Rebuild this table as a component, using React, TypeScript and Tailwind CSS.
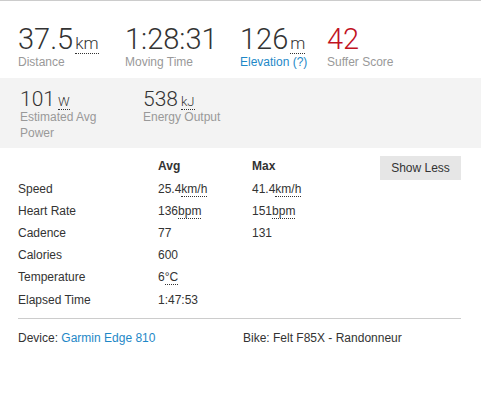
import React from "react";

const font = { fontFamily: '"Liberation Sans", Arial, sans-serif' };
const light = { fontFamily: 'Roboto, "Liberation Sans", Arial, sans-serif' };

function Unit({ children, className = "" }: { children: React.ReactNode; className?: string }) {
  return (
    <abbr className={`border-b border-dotted border-[#333] ${className}`} style={{ textDecoration: "none" }}>
      {children}
    </abbr>
  );
}

function BigStat({ value, unit, label, w, red, link }: { value: string; unit?: string; label: string; w: string; red?: boolean; link?: boolean }) {
  return (
    <li className={`${w} shrink-0`}>
      <div className={`text-[29px] leading-[32px] font-light ${red ? "text-[#c1121f]" : "text-[#333]"}`} style={light}>
        {value}
        {unit && <Unit className="text-[17px] leading-[16px] ml-[2px]">{unit}</Unit>}
      </div>
      <div className={`text-[12px] leading-[14px] ${link ? "text-[#1e88c7]" : "text-[#999]"}`}>{label}</div>
    </li>
  );
}

function MidStat({ value, unit, label, w }: { value: string; unit: string; label: string; w: string }) {
  return (
    <li className={`${w} shrink-0`}>
      <div className="text-[21px] leading-[20px] font-light text-[#333]" style={light}>
        {value}
        <Unit className="text-[13px] leading-[12px] ml-[3px]">{unit}</Unit>
      </div>
      <div className="text-[12px] leading-[16px] text-[#999] w-[90px]">{label}</div>
    </li>
  );
}

const rows: { label: string; avg: string; avgUnit?: string; max?: string; maxUnit?: string }[] = [
  { label: "Speed", avg: "25.4", avgUnit: "km/h", max: "41.4", maxUnit: "km/h" },
  { label: "Heart Rate", avg: "136", avgUnit: "bpm", max: "151", maxUnit: "bpm" },
  { label: "Cadence", avg: "77", max: "131" },
  { label: "Calories", avg: "600" },
  { label: "Temperature", avg: "6", avgUnit: "°C" },
  { label: "Elapsed Time", avg: "1:47:53" },
];

export default function App() {
  return (
    <div className="w-[481px] h-[400px] bg-white border-t border-[#ccc] text-[#333]" style={font}>
      <ul className="flex pl-[18px] pt-[22px] h-[77px]">
        <BigStat value="37.5" unit="km" label="Distance" w="w-[107px]" />
        <BigStat value="1:28:31" label="Moving Time" w="w-[115px]" />
        <BigStat value="126" unit="m" label="Elevation (?)" w="w-[87px]" link />
        <BigStat value="42" label="Suffer Score" w="w-[100px]" red />
      </ul>
      <ul className="flex bg-[#f3f3f3] pl-[20px] pt-[11px] h-[70px]">
        <MidStat value="101" unit="W" label="Estimated Avg Power" w="w-[123px]" />
        <MidStat value="538" unit="kJ" label="Energy Output" w="w-[120px]" />
      </ul>
      <div className="pl-[18px] pr-[20px] pt-[7px] text-[12px]">
        <div className="relative">
          <table className="border-collapse">
            <thead>
              <tr className="h-[22px]">
                <th className="w-[140px]"></th>
                <th className="w-[94px] text-left font-bold">Avg</th>
                <th className="w-[100px] text-left font-bold">Max</th>
              </tr>
            </thead>
            <tbody>
              {rows.map((r) => (
                <tr key={r.label} className="h-[22.2px]">
                  <td className="pt-[1px]">{r.label}</td>
                  <td className="pt-[1px]">
                    {r.avg}
                    {r.avgUnit && <Unit>{r.avgUnit}</Unit>}
                  </td>
                  <td className="pt-[1px]">
                    {r.max}
                    {r.maxUnit && <Unit>{r.maxUnit}</Unit>}
                  </td>
                </tr>
              ))}
            </tbody>
          </table>
          <button className="absolute right-0 top-[1px] w-[81px] h-[24px] bg-[#e6e6e6] text-[12px] text-[#333]">Show Less</button>
        </div>
        <div className="border-t border-[#ccc] mt-[8px] pt-[10px] flex h-[40px]">
          <div className="w-[225px]">
            Device: <a className="text-[#1e88c7]">Garmin Edge 810</a>
          </div>
          <div>Bike: Felt F85X - Randonneur</div>
        </div>
      </div>
    </div>
  );
}
